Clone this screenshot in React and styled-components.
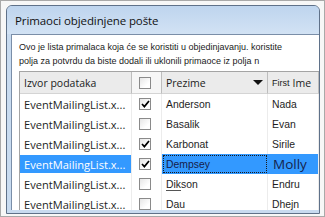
import styled, { createGlobalStyle, css } from "styled-components";

const GlobalStyle = createGlobalStyle`
  html, body {
    margin: 0;
    padding: 0;
    background: #ffffff;
  }
`;

// page frame round the cropped window
const Page = styled.div`
  width: 325px;
  height: 217px;
  box-sizing: border-box;
  border: 1px solid #a9a9a9;
  padding: 4px 4px 2px 5px;
  background: #f7f7f7;
  overflow: hidden;
`;

const Window = styled.div`
  height: 100%;
  box-sizing: border-box;
  border: 1px solid #5f7189;
  border-radius: 6px 6px 0 0;
  background: #c8dbf0;
  display: flex;
  flex-direction: column;
  overflow: hidden;
`;

const TitleBar = styled.div`
  height: 28px;
  flex: none;
  display: flex;
  align-items: center;
  padding-left: 8px;
  background: linear-gradient(#bed4ee, #d2e2f4);
  font-family: "Open Sans", "Noto Sans", sans-serif;
  font-size: 11.5px;
  color: #111;
  letter-spacing: -0.1px;
`;

const Body = styled.div`
  flex: 1;
  display: flex;
  padding: 0 0 3px 4px;
  min-height: 0;
`;

const Panel = styled.div`
  flex: 1;
  background: #ffffff;
  border-top: 1px solid #7a8ea8;
  border-left: 1px solid #7a8ea8;
  display: flex;
  flex-direction: column;
  overflow: hidden;
`;

const Intro = styled.div`
  padding: 6px 0 0 7px;
  font-family: "Liberation Sans", Arial, sans-serif;
  font-size: 9px;
  line-height: 13.5px;
  color: #1a1a1a;
  white-space: nowrap;
`;

const Grid = styled.div`
  margin: 3px 0 0 7px;
  display: grid;
  grid-template-columns: 112px 30px 106px 1fr;
  grid-auto-rows: 20px;
  grid-template-rows: 22px;
  border-left: 1px solid #a4a4a4;
  border-top: 1px solid #a4a4a4;
`;

const HeadCell = styled.div`
  display: flex;
  align-items: center;
  justify-content: ${(p) => (p.$sort ? "space-between" : "flex-start")};
  padding: 0 4px 0 ${(p) => (p.$check ? "7px" : "4px")};
  background: ${(p) => (p.$check ? "#f6f6f6" : "#ebebeb")};
  border-right: 1px solid #bdbdbd;
  border-bottom: 1px solid #d4d4d4;
  font-family: "Open Sans", "Noto Sans", sans-serif;
  font-size: 10.5px;
  color: #1b1b1b;
  white-space: nowrap;
  overflow: hidden;
`;

const Small = styled.span`
  font-family: "Liberation Sans", Arial, sans-serif;
  font-size: 9px;
  margin-right: 3px;
`;

const SortArrow = styled.svg`
  width: 10px;
  height: 5px;
  flex: none;
`;

const Cell = styled.div`
  display: flex;
  align-items: center;
  padding: 0 4px;
  border-right: 1px solid #ececec;
  white-space: nowrap;
  overflow: hidden;
  box-sizing: border-box;
  color: #1e1e1e;
  font-family: ${(p) =>
    p.$kind === "source"
      ? `"Open Sans", "Noto Sans", sans-serif`
      : `"Liberation Sans", Arial, sans-serif`};
  font-size: ${(p) => (p.$kind === "source" ? "11.1px" : "10.4px")};
  padding-left: ${(p) => (p.$kind === "check" ? "7px" : "4px")};

  ${(p) =>
    p.$selected &&
    p.$kind === "source" &&
    css`
      background: #3399ff;
      background-clip: content-box;
      padding: 1px 0 1px 0;
      color: #ffffff;
      & > span {
        padding-left: 4px;
      }
    `}

  ${(p) =>
    p.$selected &&
    p.$kind === "name" &&
    css`
      background: #3399ff;
      outline: 1px dotted #1a1a1a;
      outline-offset: -2px;
      color: #16204a;
      border-right: none;
    `}

  ${(p) =>
    p.$selected &&
    p.$kind === "first" &&
    css`
      background: #3399ff;
      color: #15234d;
      font-family: "Open Sans", "Noto Sans", sans-serif;
      font-size: 13.5px;
      padding-left: 5px;
    `}
`;

const Box = styled.span`
  width: 10px;
  height: 10px;
  flex: none;
  border: 1px solid #8a8a8a;
  background: linear-gradient(135deg, #e6e6e6, #ffffff 70%);
  display: flex;
  align-items: center;
  justify-content: center;
`;

const Mark = styled.svg`
  width: 9px;
  height: 8px;
`;

const Under = styled.span`
  text-decoration: underline;
  text-underline-offset: 2px;
  text-decoration-color: #555;
`;

function Checkbox({ checked }) {
  return (
    <Box>
      {checked && (
        <Mark viewBox="0 0 9 8">
          <path d="M1 4 L3.4 6.6 L8 1" fill="none" stroke="#000" strokeWidth="1.7" />
        </Mark>
      )}
    </Box>
  );
}

const rows = [
  { last: "Anderson", first: "Nada", checked: true },
  { last: "Basalik", first: "Evan", checked: false },
  { last: "Karbonat", first: "Sirile", checked: true },
  { last: "Dempsey", first: "Molly", checked: true, selected: true },
  { last: <><Under>Dik</Under>son</>, first: "Endru", checked: false },
  { last: <Under>Dau</Under>, first: "Dhejn", checked: false },
];

export default function App() {
  return (
    <>
      <GlobalStyle />
      <Page>
        <Window>
          <TitleBar>Primaoci objedinjene pošte</TitleBar>
          <Body>
            <Panel>
              <Intro>
                Ovo je lista primalaca koja će se koristiti u objedinjavanju. koristite
                <br />
                polja za potvrdu da biste dodali ili uklonili primaoce iz polja n
              </Intro>
              <Grid>
                <HeadCell>Izvor podataka</HeadCell>
                <HeadCell $check>
                  <Checkbox />
                </HeadCell>
                <HeadCell $sort>
                  Prezime
                  <SortArrow viewBox="0 0 10 5">
                    <path d="M0 0 H10 L5 5 Z" fill="#111" />
                  </SortArrow>
                </HeadCell>
                <HeadCell>
                  <Small>First</Small>Ime
                </HeadCell>
                {rows.map((r, i) => (
                  <Row key={i} row={r} />
                ))}
              </Grid>
            </Panel>
          </Body>
        </Window>
      </Page>
    </>
  );
}

function Row({ row }) {
  return (
    <>
      <Cell $kind="source" $selected={row.selected}>
        <span>EventMailingList.x...</span>
      </Cell>
      <Cell $kind="check">
        <Checkbox checked={row.checked} />
      </Cell>
      <Cell $kind="name" $selected={row.selected}>
        {row.last}
      </Cell>
      <Cell $kind="first" $selected={row.selected}>
        {row.first}
      </Cell>
    </>
  );
}
